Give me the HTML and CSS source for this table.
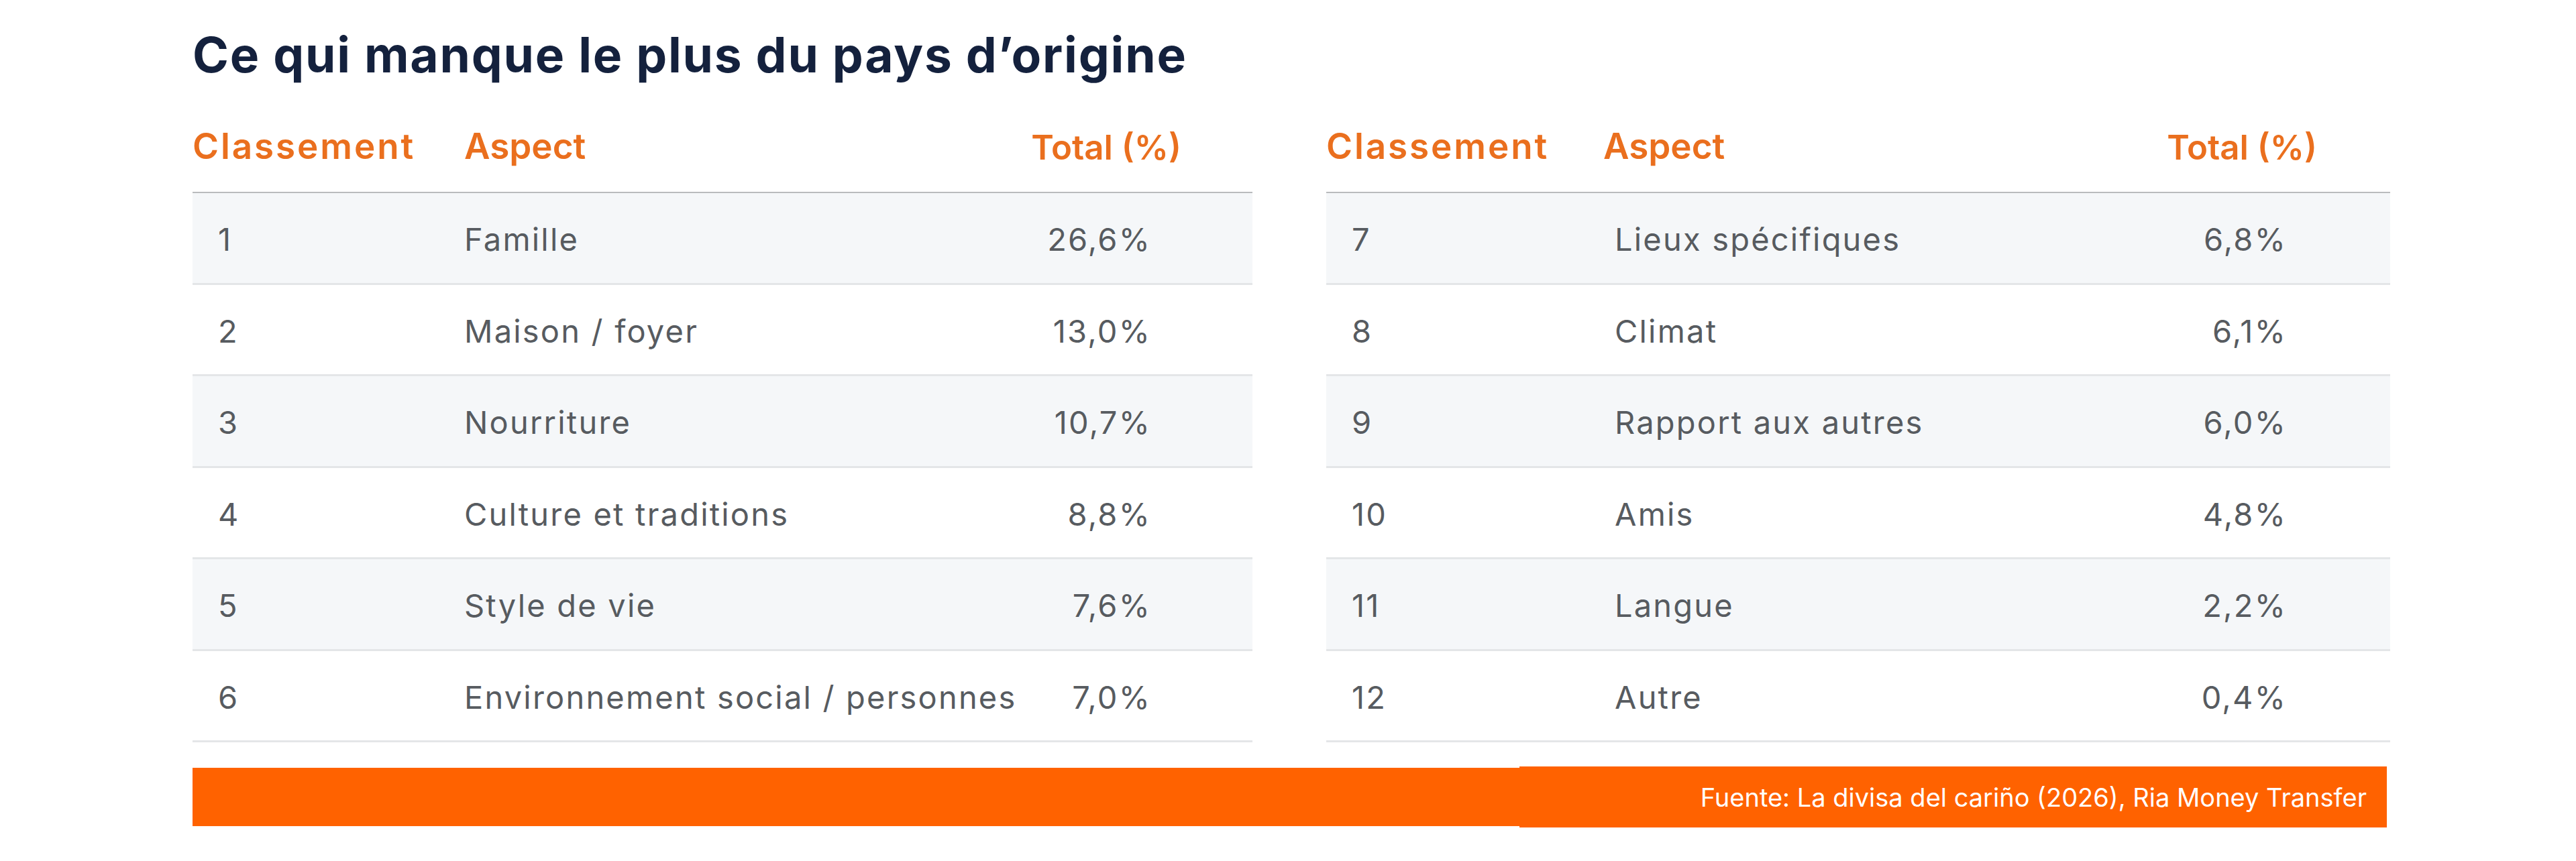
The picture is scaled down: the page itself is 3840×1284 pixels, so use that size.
FILE: index.html
```html
<!DOCTYPE html>
<html lang="fr">
<head>
<meta charset="utf-8">
<title>Ce qui manque le plus du pays d’origine</title>
<link rel="stylesheet" href="styles.css">
</head>
<body>
<main class="page">
  <h1 class="title">Ce qui manque le plus du pays d’origine</h1>
  <div class="tables">
    <div class="table table--left">
      <div class="row row--head">
        <div class="cell rank">Classement</div>
        <div class="cell aspect">Aspect</div>
        <div class="cell total">Total (%)</div>
      </div>
      <div class="row alt"><div class="cell rank">1</div><div class="cell aspect">Famille</div><div class="cell total">26,6%</div></div>
      <div class="row"><div class="cell rank">2</div><div class="cell aspect">Maison / foyer</div><div class="cell total">13,0%</div></div>
      <div class="row alt"><div class="cell rank">3</div><div class="cell aspect">Nourriture</div><div class="cell total">10,7%</div></div>
      <div class="row"><div class="cell rank">4</div><div class="cell aspect">Culture et traditions</div><div class="cell total">8,8%</div></div>
      <div class="row alt"><div class="cell rank">5</div><div class="cell aspect">Style de vie</div><div class="cell total">7,6%</div></div>
      <div class="row"><div class="cell rank">6</div><div class="cell aspect">Environnement social / personnes</div><div class="cell total">7,0%</div></div>
    </div>
    <div class="table table--right">
      <div class="row row--head">
        <div class="cell rank">Classement</div>
        <div class="cell aspect">Aspect</div>
        <div class="cell total">Total (%)</div>
      </div>
      <div class="row alt"><div class="cell rank">7</div><div class="cell aspect">Lieux spécifiques</div><div class="cell total">6,8%</div></div>
      <div class="row"><div class="cell rank">8</div><div class="cell aspect">Climat</div><div class="cell total">6,1%</div></div>
      <div class="row alt"><div class="cell rank">9</div><div class="cell aspect">Rapport aux autres</div><div class="cell total">6,0%</div></div>
      <div class="row"><div class="cell rank">10</div><div class="cell aspect">Amis</div><div class="cell total">4,8%</div></div>
      <div class="row alt"><div class="cell rank">11</div><div class="cell aspect">Langue</div><div class="cell total">2,2%</div></div>
      <div class="row"><div class="cell rank">12</div><div class="cell aspect">Autre</div><div class="cell total">0,4%</div></div>
    </div>
  </div>
  <footer class="source-bar">
    <p class="source-text">Fuente: La divisa del cariño (2026), Ria Money Transfer</p>
  </footer>
</main>
</body>
</html>
```

FILE: styles.css
```css
* { box-sizing: border-box; }

html, body {
  margin: 0;
  padding: 0;
  background: #ffffff;
}

body {
  font-family: "Inter", "Liberation Sans", sans-serif;
  width: 3840px;
  height: 1284px;
  overflow: hidden;
}

.page {
  padding: 38px 0 0 287px;
}

.title {
  margin: 0;
  font-size: 73px;
  line-height: 1.2;
  font-weight: 700;
  color: #14213d;
  letter-spacing: 1.8px;
}

.tables {
  display: flex;
  gap: 110px;
  margin-top: 61px;
}

.table--left { width: 1580px; }
.table--right { width: 1586px; }

.row {
  display: flex;
  align-items: center;
  height: 136.5px;
  padding-top: 5px;
  border-bottom: 3px solid #e4e6e8;
  font-size: 47px;
  letter-spacing: 2.2px;
  color: #575b60;
  line-height: 1.2;
}

.row.alt { background: #f5f7f9; }

.row--head {
  height: auto;
  padding-top: 0;
  align-items: flex-end;
  padding-bottom: 36px;
  border-bottom: 2px solid #b9bbbd;
  font-size: 53px;
  letter-spacing: 0;
  font-weight: 600;
  color: #ea6f1e;
}

.row--head .rank { letter-spacing: 2.9px; }
.row--head .total { font-size: 51px; }

.cell { white-space: nowrap; }

.rank {
  flex: 0 0 auto;
  padding-left: 38px;
}

.row--head .rank { padding-left: 0; }

.table--left .rank { width: 405px; }
.table--right .rank { width: 430px; }
.table--right .row--head .rank { width: 413px; }

.aspect { flex: 1 1 auto; }

.total {
  flex: 0 0 auto;
  text-align: right;
  padding-right: 151px;
}

.table--right .total { padding-right: 154px; }
.row--head .total { padding-right: 106px; }
.table--right .row--head .total { padding-right: 109px; }

.source-bar {
  display: flex;
  justify-content: flex-end;
  width: 3271px;
  height: 87px;
  margin-top: 38px;
  background: #ff6200;
}

.source-text {
  width: 1293px;
  margin: -2px 0;
  padding-right: 30px;
  display: flex;
  align-items: center;
  justify-content: flex-end;
  background: #ff6200;
  color: #ffffff;
  font-size: 38px;
  line-height: 1;
}
```
